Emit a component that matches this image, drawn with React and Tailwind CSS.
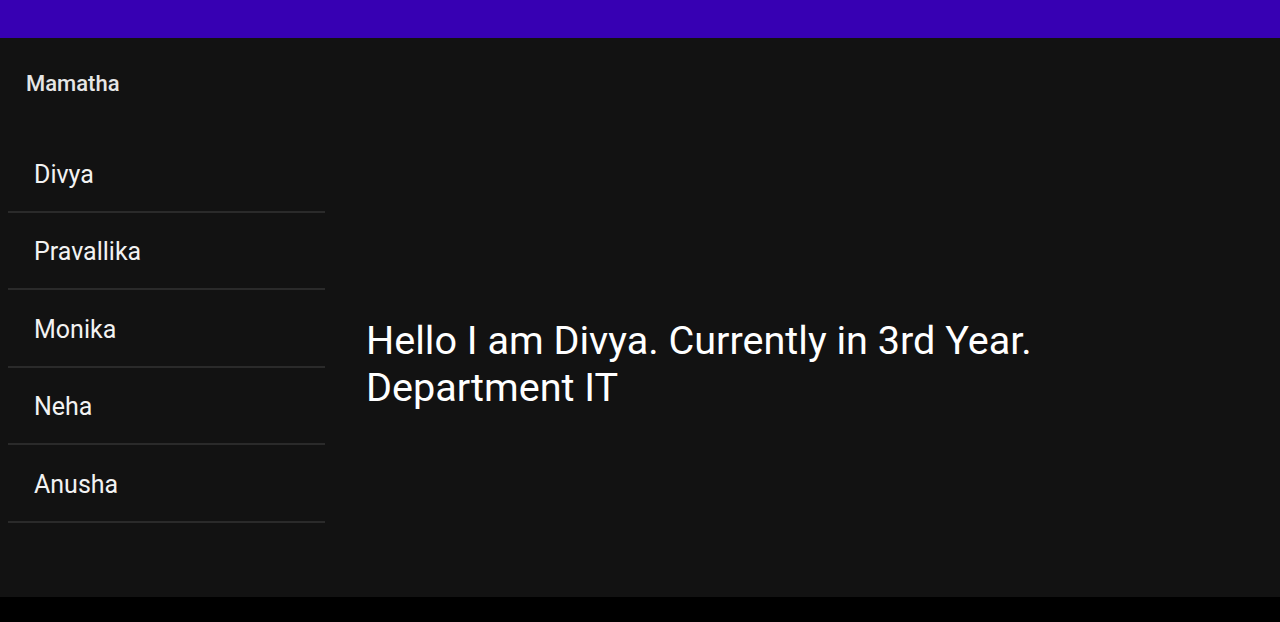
import React, { useState } from "react";

const people = [
  { name: "Divya", about: "Hello I am Divya. Currently in 3rd Year. Department IT" },
  { name: "Pravallika", about: "Hello I am Pravallika. Currently in 3rd Year. Department IT" },
  { name: "Monika", about: "Hello I am Monika. Currently in 3rd Year. Department IT" },
  { name: "Neha", about: "Hello I am Neha. Currently in 3rd Year. Department IT" },
  { name: "Anusha", about: "Hello I am Anusha. Currently in 3rd Year. Department IT" },
];

export default function App() {
  const [selected, setSelected] = useState(0);

  return (
    <div className="h-[622px] w-[1280px] flex flex-col bg-black font-['Roboto',sans-serif] overflow-hidden">
      {/* app bar */}
      <div className="h-[38px] bg-[#3700b3] shrink-0" />

      <div className="h-[559px] bg-[#121212] flex">
        {/* drawer */}
        <div className="w-[325px] pl-2 shrink-0">
          <div className="h-[97px] pl-[18px] pt-[34px]">
            <p className="text-[22px] leading-6 font-medium text-[#e6e6e6]">Mamatha</p>
          </div>
          <ul>
            {people.map((p, i) => (
              <li
                key={p.name}
                onClick={() => setSelected(i)}
                className="h-[77.5px] flex items-center pl-[26px] pt-1 border-b-2 border-[#2a2a2a] cursor-pointer"
              >
                <span className="text-[25px] leading-7 text-[#f2f2f2]">{p.name}</span>
              </li>
            ))}
          </ul>
        </div>

        {/* details */}
        <div className="flex-1 pl-[41px] pt-[279px]">
          <p className="text-[39.6px] leading-[47px] text-white w-[700px]">
            {people[selected].about}
          </p>
        </div>
      </div>
    </div>
  );
}
